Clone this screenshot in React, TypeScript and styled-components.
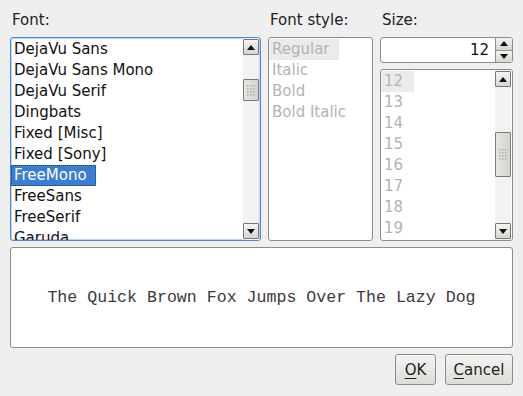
import styled, { createGlobalStyle } from "styled-components";

const GlobalStyle = createGlobalStyle`
  html, body {
    margin: 0;
    padding: 0;
    background: #efefef;
  }
  body {
    font-family: "DejaVu Sans", "Noto Sans", sans-serif;
    font-size: 15px;
    color: #1a1a1a;
  }
`;

const fonts = [
  "DejaVu Sans",
  "DejaVu Sans Mono",
  "DejaVu Serif",
  "Dingbats",
  "Fixed [Misc]",
  "Fixed [Sony]",
  "FreeMono",
  "FreeSans",
  "FreeSerif",
  "Garuda",
];
const styles = ["Regular", "Italic", "Bold", "Bold Italic"];
const sizes = ["12", "13", "14", "15", "16", "17", "18", "19"];

const Arrow = ({ down }: { down?: boolean }) => (
  <svg width="8" height="5" viewBox="0 0 8 5">
    {down ? <polygon points="0,0 8,0 4,5" fill="#111" /> : <polygon points="0,5 8,5 4,0" fill="#111" />}
  </svg>
);

const Grip = () => (
  <svg width="10" height="13" viewBox="0 0 10 13">
    {[0, 1, 2, 3].map((r) =>
      [0, 1, 2].map((c) => (
        <rect key={`${r}-${c}`} x={1 + c * 3} y={1 + r * 3} width="1.5" height="1.5" fill="#a9aba5" />
      ))
    )}
  </svg>
);

const Scrollbar = ({ thumbTop, thumbHeight }: { thumbTop: number; thumbHeight: number }) => (
  <Track>
    <ScrollButton>
      <Arrow />
    </ScrollButton>
    <TrackBody>
      <Thumb style={{ marginTop: thumbTop, height: thumbHeight }}>
        <Grip />
      </Thumb>
    </TrackBody>
    <ScrollButton>
      <Arrow down />
    </ScrollButton>
  </Track>
);

const App = () => {
  return (
    <>
      <GlobalStyle />
      <Dialog>
        <Columns>
          <Label>Font:</Label>
          <Label>Font style:</Label>
          <Label>Size:</Label>

          <ListBox $focused>
            <Items>
              {fonts.map((f) => (
                <Row key={f}>
                  <Item $selected={f === "FreeMono"}>{f}</Item>
                </Row>
              ))}
            </Items>
            <Scrollbar thumbTop={24} thumbHeight={22} />
          </ListBox>

          <ListBox>
            <Items>
              {styles.map((s) => (
                <Row key={s}>
                  <Item $muted $current={s === "Regular"}>
                    {s}
                  </Item>
                </Row>
              ))}
            </Items>
          </ListBox>

          <SizeColumn>
            <SpinBox>
              <SpinValue>12</SpinValue>
              <SpinButtons>
                <SpinButton>
                  <Arrow />
                </SpinButton>
                <SpinButton>
                  <Arrow down />
                </SpinButton>
              </SpinButtons>
            </SpinBox>
            <ListBox>
              <Items>
                {sizes.map((s) => (
                  <Row key={s}>
                    <Item $muted $current={s === "12"} $minWidth={33}>
                      {s}
                    </Item>
                  </Row>
                ))}
              </Items>
              <Scrollbar thumbTop={45} thumbHeight={45} />
            </ListBox>
          </SizeColumn>
        </Columns>

        <Preview>The Quick Brown Fox Jumps Over The Lazy Dog</Preview>

        <Actions>
          <Button $width={41}>
            <u>O</u>K
          </Button>
          <Button $width={68}>
            <u>C</u>ancel
          </Button>
        </Actions>
      </Dialog>
    </>
  );
};

const Dialog = styled.div`
  display: flex;
  flex-direction: column;
  padding: 10px 10px 11px 10px;
  height: 396px;
  box-sizing: border-box;
`;

const Columns = styled.div`
  display: grid;
  grid-template-columns: 251px 105px 133px;
  grid-template-rows: 20px 204px;
  column-gap: 7px;
  row-gap: 7px;
`;

const Label = styled.div`
  line-height: 21px;
  padding-left: 2px;
  color: #222;
`;

const ListBox = styled.div<{ $focused?: boolean }>`
  display: flex;
  background: #fff;
  border: 1px solid ${(p) => (p.$focused ? "#4a8ad8" : "#8c8c8c")};
  box-shadow: ${(p) => (p.$focused ? "inset 0 0 0 1px #b9d3f0" : "none")};
  border-radius: 3px;
  overflow: hidden;
  box-sizing: border-box;
  min-height: 0;
  flex: 1;
`;

const Items = styled.div`
  flex: 1;
  display: flex;
  flex-direction: column;
  padding-top: 1px;
  overflow: hidden;
`;

const Row = styled.div`
  height: 21px;
  flex-shrink: 0;
`;

const Item = styled.span<{ $selected?: boolean; $muted?: boolean; $current?: boolean; $minWidth?: number }>`
  display: inline-block;
  box-sizing: border-box;
  height: 21px;
  line-height: 21px;
  padding: 0 9px 0 3px;
  min-width: ${(p) => (p.$minWidth ? `${p.$minWidth}px` : "0")};
  white-space: nowrap;
  color: ${(p) => (p.$selected ? "#fff" : p.$muted ? "#b3b3b3" : "#111")};
  background: ${(p) => (p.$selected ? "#3a7dd3" : p.$current ? "#ebebeb" : "transparent")};
  outline: ${(p) => (p.$selected ? "1px dotted #1d3f6a" : "none")};
  outline-offset: -1px;
`;

const Track = styled.div`
  width: 16px;
  margin: 0 1px 0 0;
  display: flex;
  flex-direction: column;
  background-color: #f6f6f6;
  background-image: repeating-conic-gradient(#ececec 0 25%, #fafafa 0 50%);
  background-size: 2px 2px;
`;

const ScrollButton = styled.div`
  height: 16px;
  flex-shrink: 0;
  display: flex;
  align-items: center;
  justify-content: center;
  box-sizing: border-box;
  border: 1px solid #777;
  border-radius: 1px;
  background: linear-gradient(#f4f4f2, #d6d7d2);
  margin-top: 1px;

  &:last-child {
    margin-top: 0;
    margin-bottom: 1px;
  }
`;

const TrackBody = styled.div`
  flex: 1;
  display: flex;
  flex-direction: column;
`;

const Thumb = styled.div`
  box-sizing: border-box;
  border: 1px solid #7a7a7a;
  border-radius: 1px;
  background: linear-gradient(90deg, #e6e7e3, #d3d4cf);
  display: flex;
  align-items: center;
  justify-content: center;
`;

const SizeColumn = styled.div`
  display: flex;
  flex-direction: column;
  gap: 6px;
  min-height: 0;
`;

const SpinBox = styled.div`
  display: flex;
  height: 26px;
  flex-shrink: 0;
  box-sizing: border-box;
  background: #fff;
  border: 1px solid #8c8c8c;
  border-radius: 3px;
  overflow: hidden;
`;

const SpinValue = styled.div`
  flex: 1;
  text-align: right;
  line-height: 24px;
  padding-right: 6px;
  color: #111;
`;

const SpinButtons = styled.div`
  width: 17px;
  display: flex;
  flex-direction: column;
  background: #efefef;
`;

const SpinButton = styled.div`
  flex: 1;
  display: flex;
  align-items: center;
  justify-content: center;
  box-sizing: border-box;
  border-left: 1px solid #8c8c8c;
  background: linear-gradient(#f4f4f2, #d6d7d2);

  & + & {
    border-top: 1px solid #8c8c8c;
  }
`;

const Preview = styled.div`
  margin-top: 6px;
  height: 101px;
  box-sizing: border-box;
  background: #fff;
  border: 1px solid #8c8c8c;
  border-radius: 3px;
  display: flex;
  align-items: center;
  justify-content: center;
  font-family: "Liberation Mono", "Courier New", monospace;
  font-size: 16.6px;
  color: #3a3a3a;
  white-space: nowrap;
`;

const Actions = styled.div`
  margin-top: auto;
  display: flex;
  justify-content: flex-end;
  gap: 9px;
  padding-right: 0;
`;

const Button = styled.button<{ $width: number }>`
  height: 31px;
  width: ${(p) => p.$width}px;
  padding: 0;
  box-sizing: border-box;
  font-family: "DejaVu Sans", sans-serif;
  font-size: 15px;
  color: #222;
  border: 1px solid #8c8c8c;
  border-radius: 3px;
  background: linear-gradient(#f4f4f2, #dcddd8);
  box-shadow: inset 0 1px 0 #fff;

  u {
    text-decoration-thickness: 1px;
    text-underline-offset: 3px;
  }
`;

export default App;
